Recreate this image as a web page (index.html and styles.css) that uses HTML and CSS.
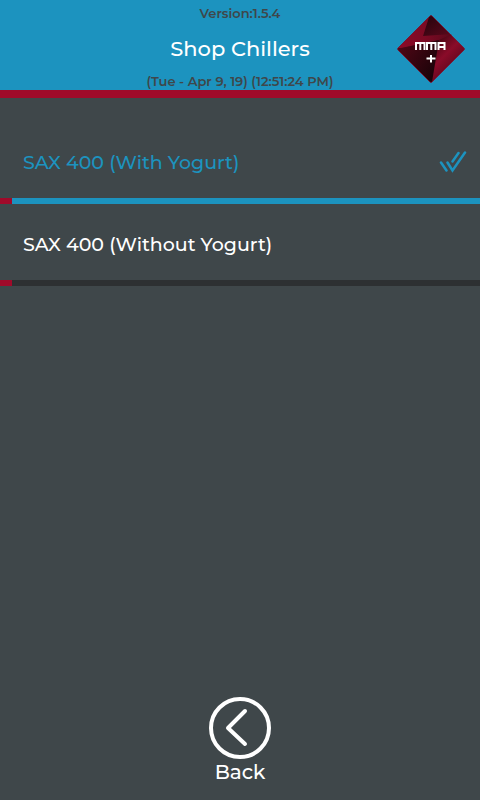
FILE: index.html
```html
<!DOCTYPE html>
<html lang="en">
<head>
<meta charset="utf-8">
<meta name="viewport" content="width=device-width, initial-scale=1">
<title>Shop Chillers</title>
<link rel="stylesheet" href="styles.css">
</head>
<body>
<header class="header">
  <div class="heading">
    <p class="meta">Version:1.5.4</p>
    <h1 class="title">Shop Chillers</h1>
    <p class="meta">(Tue - Apr 9, 19) (12:51:24 PM)</p>
  </div>
  <svg class="logo" viewBox="0 0 70 70" role="img" aria-label="MMA plus">
    <defs>
      <linearGradient id="right" gradientUnits="userSpaceOnUse" x1="38" y1="30" x2="58" y2="50">
        <stop offset="0" stop-color="#4c0615"/>
        <stop offset=".55" stop-color="#8a0b29"/>
        <stop offset="1" stop-color="#680820"/>
      </linearGradient>
      <linearGradient id="top" x1="0" y1="0" x2="1" y2="1">
        <stop offset="0" stop-color="#24030c"/>
        <stop offset="1" stop-color="#5c081c"/>
      </linearGradient>
      <linearGradient id="left" x1="0" y1="0" x2="1" y2=".6">
        <stop offset="0" stop-color="#540717"/>
        <stop offset="1" stop-color="#1c0309"/>
      </linearGradient>
      <linearGradient id="band" x1="0" y1="0" x2="1" y2="0">
        <stop offset="0" stop-color="#8c0a28"/>
        <stop offset=".5" stop-color="#7c0a24"/>
        <stop offset="1" stop-color="#5a081b"/>
      </linearGradient>
    </defs>
    <path d="M34 2Q35 1 36 2L68 34Q69 35 68 36L36 68Q35 69 34 68L2 36Q1 35 2 34Z" fill="url(#right)"/>
    <path d="M33 3L34 2Q35 1 36 2L56 22L27 22Z" fill="url(#top)"/>
    <path d="M33 3L27 22L56 20L43 26L5 34L2 34Z" fill="url(#band)"/>
    <path d="M2 35L43 26L36 68L34 68L2 36Z" fill="url(#left)"/>
    <path d="M34 2Q35 1 36 2L68 34Q69 35 68 36L36 68Q35 69 34 68L2 36Q1 35 2 34Z" fill="none" stroke="#7c1230" stroke-width=".8"/>
    <g fill="none" stroke="#fff" stroke-width="2">
      <path d="M20 36V29H28.500V36M24.300 29V36"/>
      <path d="M31 36V29H39.500V36M35.300 29V36"/>
      <path d="M42.500 36V29H48.500V36M42.500 33H48.500"/>
      <path d="M30.500 44.500H39.500M35 41V48.500"/>
    </g>
  </svg>
</header>
<main class="main">
  <ul class="list">
    <li><button class="item selected" type="button" aria-pressed="true">
      <span>SAX 400 (With Yogurt)</span>
      <svg class="check" viewBox="0 0 28 24" aria-hidden="true">
        <path d="M2 11.500L7.500 19.500M8.500 11.500L13.500 19.500L26 1.500M13.500 10.500L19.500 2"/>
      </svg>
    </button></li>
    <li><button class="item" type="button" aria-pressed="false">
      <span>SAX 400 (Without Yogurt)</span>
    </button></li>
  </ul>
</main>
<footer class="footer">
  <button class="back" type="button">
    <svg class="back-icon" viewBox="0 0 62 62" aria-hidden="true">
      <circle cx="31" cy="31" r="29"/>
      <path d="M36 14L19 31L36 47"/>
    </svg>
    <span>Back</span>
  </button>
</footer>
</body>
</html>
```
FILE: styles.css
```css
* {
  box-sizing: border-box;
}

body {
  margin: 0;
  min-height: 100vh;
  display: flex;
  flex-direction: column;
  background: #3f474a;
  color: #fff;
  font-family: Montserrat, Inter, sans-serif;
  font-weight: 500;
}

button {
  border: 0;
  background: none;
  color: inherit;
  font: inherit;
  cursor: pointer;
}

.header {
  position: relative;
  background: #1c93bf;
  border-bottom: 8px solid #a00a2a;
}

.heading {
  padding-top: 4px;
  text-align: center;
}

.meta {
  margin: 0;
  color: #3f474a;
  font-size: 13px;
  font-weight: 600;
  line-height: 18px;
}

.title {
  margin: 0;
  padding-top: 4px;
  font-size: 21px;
  font-weight: 500;
  line-height: 46px;
}

.logo {
  position: absolute;
  top: 14px;
  right: 14px;
  width: 70px;
  height: 70px;
}

.main {
  flex: 1;
  padding-top: 24px;
}

.list {
  margin: 0;
  padding: 0;
  list-style: none;
}

.item {
  display: flex;
  align-items: center;
  justify-content: space-between;
  width: 100%;
  height: 82px;
  padding: 5px 13px 6px 23px;
  background: linear-gradient(to right, #a00a2a 12px, #2d3032 12px) bottom / 100% 6px no-repeat;
  font-size: 19px;
  text-align: left;
}

.selected {
  background-image: linear-gradient(to right, #a00a2a 12px, #1c93bf 12px);
  color: #1c93bf;
}

.check {
  width: 28px;
  height: 24px;
  fill: none;
  stroke: #1c93bf;
  stroke-width: 2.5;
  stroke-linecap: round;
}

.footer {
  display: flex;
  justify-content: center;
  padding-bottom: 14px;
}

.back {
  display: flex;
  flex-direction: column;
  align-items: center;
  padding: 0;
  font-size: 20px;
  line-height: 27px;
}

.back-icon {
  width: 62px;
  height: 62px;
  fill: none;
  stroke: #fff;
  stroke-width: 4;
  stroke-linecap: round;
  stroke-linejoin: round;
}
```
